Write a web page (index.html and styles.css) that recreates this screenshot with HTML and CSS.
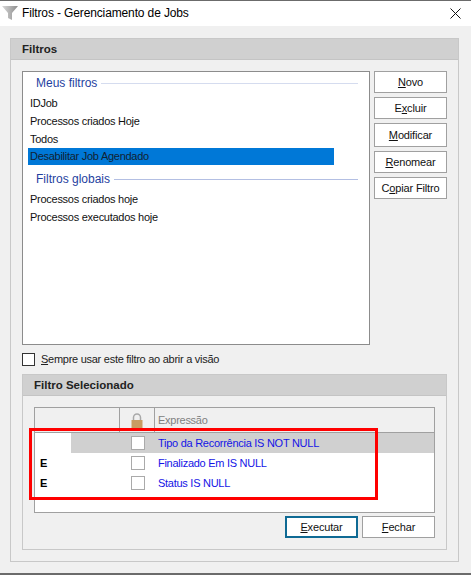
FILE: index.html
```html
<!DOCTYPE html>
<html lang="pt">
<head>
<meta charset="utf-8">
<title>Filtros - Gerenciamento de Jobs</title>
<link rel="stylesheet" href="styles.css">
</head>
<body>
<div class="window">
  <header class="titlebar">
    <svg class="funnel" width="18" height="16" viewBox="0 0 18 16">
      <defs><linearGradient id="fg" x1="0" x2="1" y1="0" y2="0"><stop offset="0" stop-color="#d8d8d8"/><stop offset="1" stop-color="#8c8c8c"/></linearGradient></defs>
      <path d="M1 1h16l-6 7v7l-4-2V8z" fill="url(#fg)"/>
    </svg>
    <span class="title">Filtros - Gerenciamento de Jobs</span>
    <svg class="close" width="11" height="11" viewBox="0 0 11 11"><path d="M.5.5l10 10M10.500.5l-10 10" stroke="#111" stroke-width="1" fill="none"/></svg>
  </header>
  <main class="content">
    <section class="panel outer">
      <h2 class="panel-head">Filtros</h2>
      <div class="outer-body">
        <div class="top-row">
          <div class="list">
            <div class="group"><span>Meus filtros</span><i class="rule light"></i></div>
            <div class="item">IDJob</div>
            <div class="item">Processos criados Hoje</div>
            <div class="item">Todos</div>
            <div class="item selected">Desabilitar Job Agendado</div>
            <div class="group second"><span>Filtros globais</span><i class="rule"></i></div>
            <div class="item">Processos criados hoje</div>
            <div class="item">Processos executados hoje</div>
          </div>
          <div class="actions">
            <button class="btn"><u>N</u>ovo</button>
            <button class="btn">E<u>x</u>cluir</button>
            <button class="btn tall"><u>M</u>odificar</button>
            <button class="btn"><u>R</u>enomear</button>
            <button class="btn">C<u>o</u>piar Filtro</button>
          </div>
        </div>
        <label class="always"><span class="box"></span><span class="always-text"><u>S</u>empre usar este filtro ao abrir a visão</span></label>
        <section class="panel inner">
          <h2 class="panel-head inner-head">Filtro Selecionado</h2>
          <div class="inner-body">
            <div class="grid">
              <div class="grid-head">
                <div class="col-a"></div>
                <div class="col-b">
                  <svg width="12" height="16" viewBox="0 0 12 16"><path d="M2.500 8V4.500a3.500 3.500 0 0 1 7 0V8" fill="none" stroke="#a8a8a8" stroke-width="1.500"/><rect x="0.500" y="7" width="11" height="9" fill="#c89b62"/></svg>
                </div>
                <div class="col-c">Expressão</div>
              </div>
              <div class="grid-row current">
                <div class="mark"></div>
                <div class="fill"><span class="cbox"></span><span class="expr">Tipo da Recorrência IS NOT NULL</span></div>
              </div>
              <div class="grid-row">
                <div class="mark">E</div>
                <div class="fill"><span class="cbox"></span><span class="expr">Finalizado Em IS NULL</span></div>
              </div>
              <div class="grid-row">
                <div class="mark">E</div>
                <div class="fill"><span class="cbox"></span><span class="expr">Status IS NULL</span></div>
              </div>
            </div>
            <div class="footer">
              <button class="btn default"><u>E</u>xecutar</button>
              <button class="btn"><u>F</u>echar</button>
            </div>
          </div>
        </section>
      </div>
    </section>
  </main>
  <div class="highlight"></div>
</div>
</body>
</html>
```

FILE: styles.css
```css
* { box-sizing: border-box; }
html, body { margin: 0; padding: 0; }
body { font-family: "Liberation Sans", Arial, sans-serif; font-size: 11px; letter-spacing: -0.27px; color: #111; background: #f0f0f0; }
.window { position: relative; width: 471px; height: 575px; display: flex; flex-direction: column; border-top: 1px solid #6b6b6b; border-bottom: 2px solid #6b6b6b; overflow: hidden; }
.titlebar { height: 25px; flex: none; background: #fff; display: flex; align-items: center; padding: 0 10px 1px 1px; }
.funnel { flex: none; margin-right: 3px; }
.title { flex: 1; font-size: 12px; letter-spacing: -0.13px; color: #000; }
.close { flex: none; }
.content { flex: 1; padding: 12px 12px 11px 10px; display: flex; }
.panel { border: 1px solid #c8c8c8; display: flex; flex-direction: column; }
.outer { flex: 1; }
.panel-head { margin: 0; height: 21px; flex: none; background: #d0d0d0; border-bottom: 1px solid #c4c4c4; font-size: 11.500px; font-weight: 700; letter-spacing: 0; line-height: 20px; padding-left: 11px; color: #222; }
.outer-body { flex: 1; padding: 11px 11px 11px; display: flex; flex-direction: column; }
.top-row { display: flex; gap: 4px; }
.list { width: 348px; height: 274px; background: #fff; border: 1px solid #8c8c8c; padding: 2px 11px 0 5px; }
.group { display: flex; align-items: center; height: 18px; padding-left: 8px; gap: 4px; color: #1f3f9f; font-size: 12px; letter-spacing: 0; }
.group.second { margin-top: 5px; }
.rule { flex: 1; height: 1px; background: #d5dcef; }
.group.second .rule { background: #b3bfe3; }
.item { height: 18px; line-height: 18px; padding-left: 2px; white-space: nowrap; }
.group + .item { margin-top: 2px; }
.item.selected { width: 306px; height: 17px; line-height: 17px; background: #0078d7; color: #123; }
.actions { display: flex; flex-direction: column; gap: 4px; width: 73px; }
.btn { width: 73px; height: 22px; padding: 0; background: #fff; border: 1px solid #a0a0a0; font: inherit; letter-spacing: -0.15px; color: #111; }
.btn.tall { height: 24px; }
.btn.default { border: 2px solid #0f6a94; }
.always { display: flex; align-items: center; gap: 6px; height: 13px; margin-top: 8px; color: #222; }
.always-text { margin-top: -1px; }
.box { width: 13px; height: 13px; flex: none; background: #fff; border: 1px solid #333; }
.inner { margin-top: 8px; flex: 1; }
.inner-body { flex: 1; padding: 11px 11px 11px; display: flex; flex-direction: column; }
.grid { height: 106px; background: #fff; border: 1px solid #a0a0a0; }
.grid-head { height: 25px; display: flex; background: #f0f0f0; border-bottom: 1px solid #a0a0a0; }
.col-a { width: 85px; border-right: 1px solid #a0a0a0; }
.col-b { width: 35px; border-right: 1px solid #a0a0a0; display: flex; justify-content: center; align-items: flex-end; padding-bottom: 3px; }
.col-c { flex: 1; padding-left: 3px; color: #808080; line-height: 25px; }
.grid-row { height: 20px; display: flex; }
.mark { width: 36px; flex: none; padding-left: 5px; font-weight: 700; line-height: 20px; color: #000; background: #fff; }
.fill { flex: 1; display: flex; align-items: center; padding-left: 60px; }
.current .fill { background: #d0d0d0; }
.cbox { width: 14px; height: 14px; flex: none; background: #fff; border: 1px solid #aaa; }
.expr { margin-left: 13px; color: #1414e6; }
.footer { display: flex; justify-content: flex-end; gap: 4px; margin-top: 3px; }
.highlight { position: absolute; left: 29px; top: 427px; width: 349px; height: 72px; border: 3px solid #f00; }
```
